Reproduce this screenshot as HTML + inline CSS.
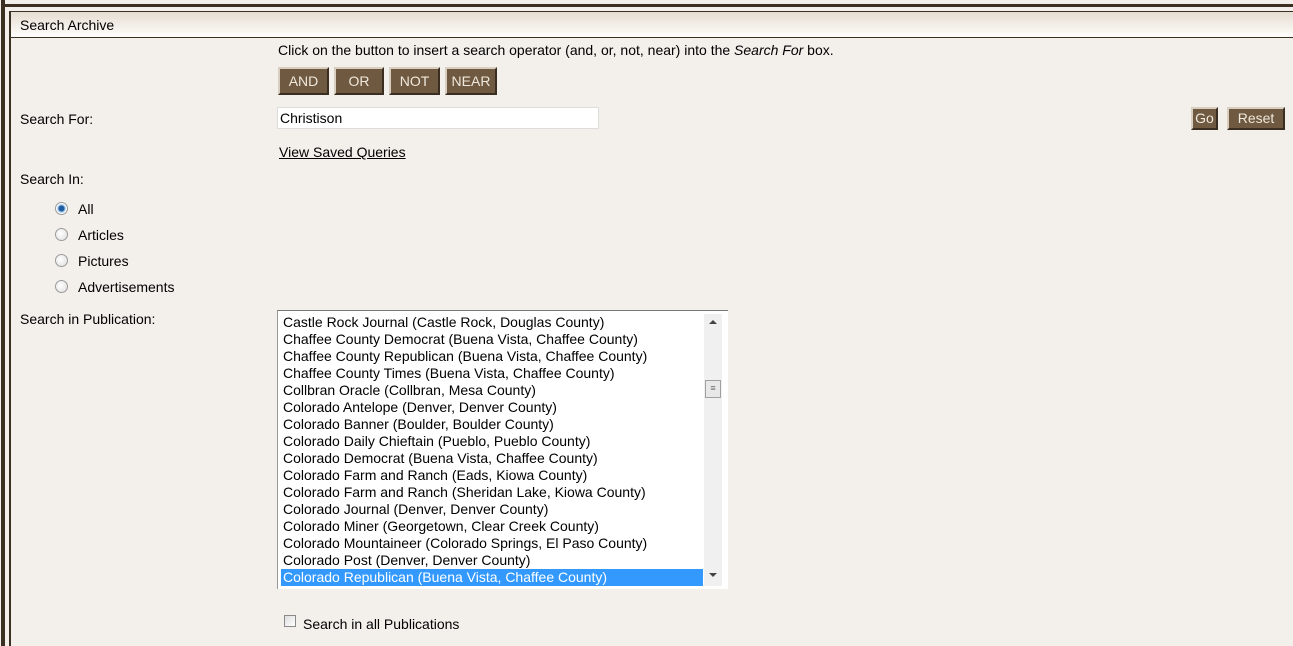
<!DOCTYPE html>
<html><head><style>
body{margin:0;width:1293px;height:646px;background:#f3f0eb;font-family:"Liberation Sans",Tahoma,sans-serif;font-size:14px;color:#000;position:relative;overflow:hidden}
.a{position:absolute;white-space:nowrap}
.btn{position:absolute;background:#6f5a41;color:#efe8dc;border:2px solid;border-color:#d9cfc0 #3a2e20 #3a2e20 #d9cfc0;box-sizing:border-box;text-align:center;font-size:14px;line-height:24px}
.radio{position:absolute;width:11px;height:11px;border-radius:50%;border:1px solid #9a9a9a;background:radial-gradient(circle at 40% 40%,#fff,#ddd)}
.list div{height:17px;line-height:17px;padding-left:5px}
</style></head><body>
<div class="a" style="left:1px;top:0;width:4px;height:646px;background:#3b3022"></div>
<div class="a" style="left:1px;top:4px;width:1292px;height:3px;background:#3b3022"></div>
<div class="a" style="left:9px;top:11px;width:2px;height:635px;background:#3b3022"></div>
<div class="a" style="left:9px;top:11px;width:1284px;height:1px;background:#3b3022"></div>
<div class="a" style="left:11px;top:12px;width:1282px;height:25px;background:linear-gradient(#e6ddd2,#f7f3ee 70%,#fff)"></div>
<div class="a" style="left:9px;top:37px;width:1284px;height:1px;background:#3b3022"></div>
<div class="a" style="left:20px;top:17px">Search Archive</div>
<div class="a" style="left:278px;top:42px">Click on the button to insert a search operator (and, or, not, near) into the <i>Search For</i> box.</div>
<div class="btn" style="left:278px;top:67px;width:51px;height:28px">AND</div>
<div class="btn" style="left:334px;top:67px;width:50px;height:28px">OR</div>
<div class="btn" style="left:389px;top:67px;width:51px;height:28px">NOT</div>
<div class="btn" style="left:445px;top:67px;width:52px;height:28px">NEAR</div>
<div class="a" style="left:20px;top:111px">Search For:</div>
<div class="a" style="left:277px;top:107px;width:322px;height:22px;background:#fff;border:1px solid #ddd;box-sizing:border-box;padding:3px 2px;line-height:15px">Christison</div>
<div class="btn" style="left:1191px;top:107px;width:27px;height:23px;line-height:19px">Go</div>
<div class="btn" style="left:1227px;top:107px;width:58px;height:23px;line-height:19px">Reset</div>
<div class="a" style="left:279px;top:144px;text-decoration:underline">View Saved Queries</div>
<div class="a" style="left:20px;top:171px">Search In:</div>
<div class="radio" style="left:55px;top:202px;background:radial-gradient(circle,#1f5d9e 0 2.5px,#9cc3e8 3.5px,#fff 5px)"></div>
<div class="a" style="left:78px;top:201px">All</div>
<div class="radio" style="left:55px;top:228px"></div>
<div class="a" style="left:78px;top:227px">Articles</div>
<div class="radio" style="left:55px;top:254px"></div>
<div class="a" style="left:78px;top:253px">Pictures</div>
<div class="radio" style="left:55px;top:280px"></div>
<div class="a" style="left:78px;top:279px">Advertisements</div>
<div class="a" style="left:20px;top:311px">Search in Publication:</div>
<div class="a" style="left:277px;top:310px;width:451px;height:279px;background:#fff;border-top:1px solid #777;border-left:1px solid #999;box-sizing:border-box"></div>
<div class="a list" style="left:278px;top:314px;width:425px">
<div>Castle Rock Journal (Castle Rock, Douglas County)</div>
<div>Chaffee County Democrat (Buena Vista, Chaffee County)</div>
<div>Chaffee County Republican (Buena Vista, Chaffee County)</div>
<div>Chaffee County Times (Buena Vista, Chaffee County)</div>
<div>Collbran Oracle (Collbran, Mesa County)</div>
<div>Colorado Antelope (Denver, Denver County)</div>
<div>Colorado Banner (Boulder, Boulder County)</div>
<div>Colorado Daily Chieftain (Pueblo, Pueblo County)</div>
<div>Colorado Democrat (Buena Vista, Chaffee County)</div>
<div>Colorado Farm and Ranch (Eads, Kiowa County)</div>
<div>Colorado Farm and Ranch (Sheridan Lake, Kiowa County)</div>
<div>Colorado Journal (Denver, Denver County)</div>
<div>Colorado Miner (Georgetown, Clear Creek County)</div>
<div>Colorado Mountaineer (Colorado Springs, El Paso County)</div>
<div>Colorado Post (Denver, Denver County)</div>
<div style="background:#3399ff;color:#fff;margin-left:3px;padding-left:2px">Colorado Republican (Buena Vista, Chaffee County)</div>
</div>
<div class="a" style="left:704px;top:314px;width:18px;height:272px;background:#f0f0f0"></div>
<div class="a" style="left:709px;top:320px;width:0;height:0;border:4px solid transparent;border-bottom:4px solid #444;border-top:0"></div>
<div class="a" style="left:705px;top:380px;width:16px;height:18px;background:#e8e8e8;border:1px solid #a0a0a0;box-sizing:border-box;font-size:9px;text-align:center;line-height:15px;color:#666">≡</div>
<div class="a" style="left:709px;top:573px;width:0;height:0;border:4px solid transparent;border-top:4px solid #444;border-bottom:0"></div>
<div class="a" style="left:284px;top:615px;width:12px;height:12px;border:1px solid #8a8a8a;box-sizing:border-box;background:linear-gradient(135deg,#ddd,#fff)"></div>
<div class="a" style="left:303px;top:616px">Search in all Publications</div>
</body></html>
